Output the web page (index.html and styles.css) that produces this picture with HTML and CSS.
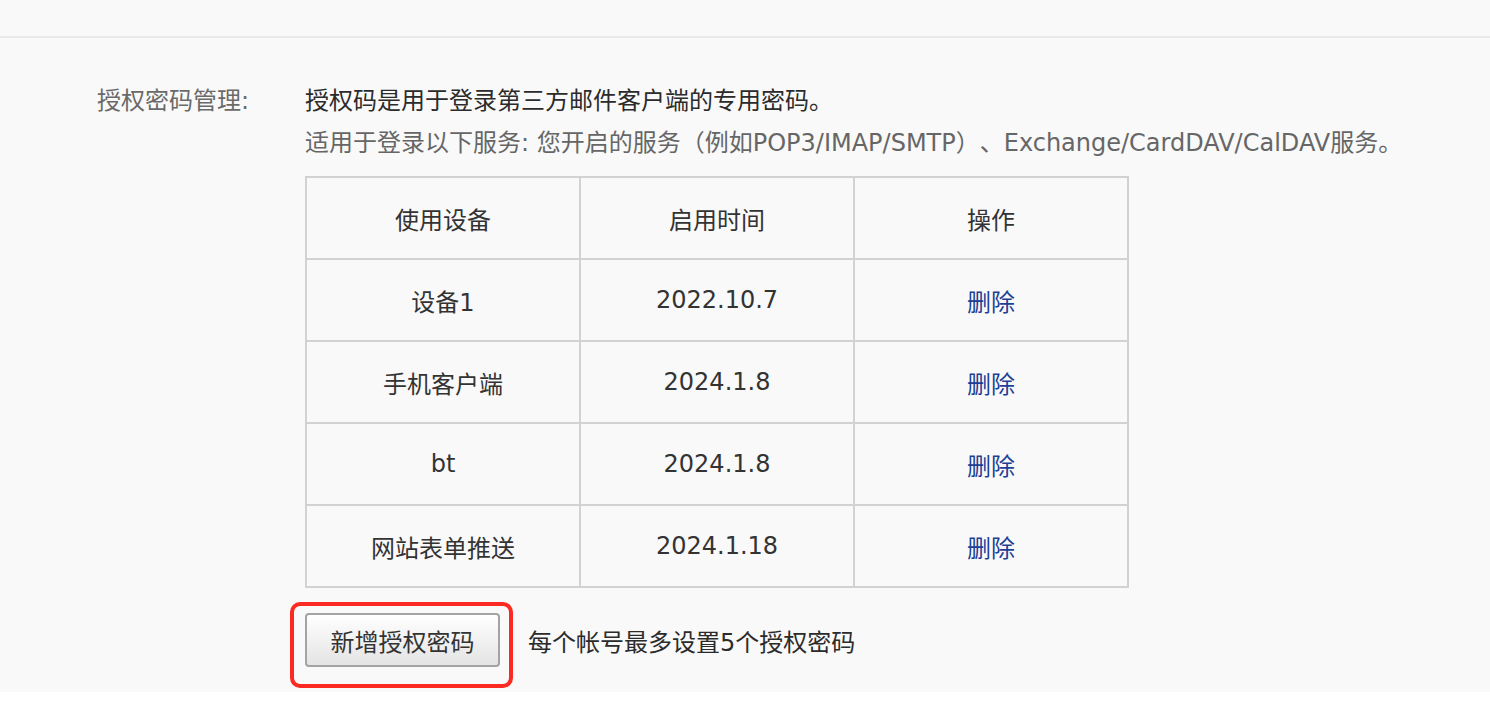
FILE: index.html
```html
<html><head>
    <title>授权密码管理</title>
    <link rel="stylesheet" href="styles.css">
</head>
<body>

<div id="pagina">
    <div class="topo"></div>
    <div class="linha">
        <div class="rotulo">授权密码管理:</div>
        <div class="conteudo">
            <p class="titulo">授权码是用于登录第三方邮件客户端的专用密码。</p>
            <p class="descricao">适用于登录以下服务: 您开启的服务（例如POP3/IMAP/SMTP）、Exchange/CardDAV/CalDAV服务。</p>
            <table>
                <thead><tr><th>使用设备</th><th>启用时间</th><th>操作</th></tr></thead>
                <tbody>
                    <tr><td>设备1</td><td>2022.10.7</td><td><a href="#">删除</a></td></tr>
                    <tr><td>手机客户端</td><td>2024.1.8</td><td><a href="#">删除</a></td></tr>
                    <tr><td>bt</td><td>2024.1.8</td><td><a href="#">删除</a></td></tr>
                    <tr><td>网站表单推送</td><td>2024.1.18</td><td><a href="#">删除</a></td></tr>
                </tbody>
            </table>
            <div class="acoes">
                <span class="destaque"><input type="button" class="botao" value="新增授权密码"></span>
                <span class="aviso">每个帐号最多设置5个授权密码</span>
            </div>
        </div>
    </div>
</div>

</body></html>
```

FILE: styles.css
```css
body {
    margin: 0;
    padding: 0;
    background-color: #ffffff;
    font-family: "DejaVu Sans", "Noto Sans CJK SC", sans-serif;
    font-size: 24px;
    color: #333333;
    text-spacing-trim: space-all;
}
#pagina {
    background-color: #f9f9f9;
    height: 692px;
}
.topo {
    height: 36px;
    border-bottom: 2px solid #e9e9e9;
}
.linha {
    display: flex;
    padding-top: 42px;
}
.rotulo {
    width: 208px;
    padding-left: 97px;
    line-height: 42px;
    color: #6a6a6a;
}
.conteudo {
    flex: 1;
}
.titulo, .descricao {
    margin: 0;
    line-height: 42px;
    white-space: nowrap;
}
.titulo {
    color: #2b2b2b;
}
.descricao {
    color: #666666;
    margin-bottom: 12px;
}
table {
    width: 824px;
    border-collapse: collapse;
    table-layout: fixed;
    font-size: inherit;
}
th, td {
    border: 2px solid #d2d2d2;
    height: 82px;
    padding: 0;
    text-align: center;
    font-weight: normal;
    color: #333333;
}
td a {
    color: #1b4096;
    text-decoration: none;
}
.acoes {
    display: flex;
    align-items: center;
    margin-top: 25px;
}
.destaque {
    position: relative;
    display: inline-block;
}
.destaque::after {
    content: "";
    position: absolute;
    left: -15px;
    top: -11px;
    right: -13px;
    bottom: -21px;
    border: 4px solid #fb2a22;
    border-radius: 10px;
}
.botao {
    width: 195px;
    height: 54px;
    border: 2px solid #a3a3a3;
    border-radius: 4px;
    background: linear-gradient(#ffffff, #e4e4e4);
    font-family: "DejaVu Sans", "Noto Sans CJK SC", sans-serif;
    font-size: 24px;
    color: #333333;
    display: block;
}
.aviso {
    margin-left: 28px;
    color: #2b2b2b;
}
```
